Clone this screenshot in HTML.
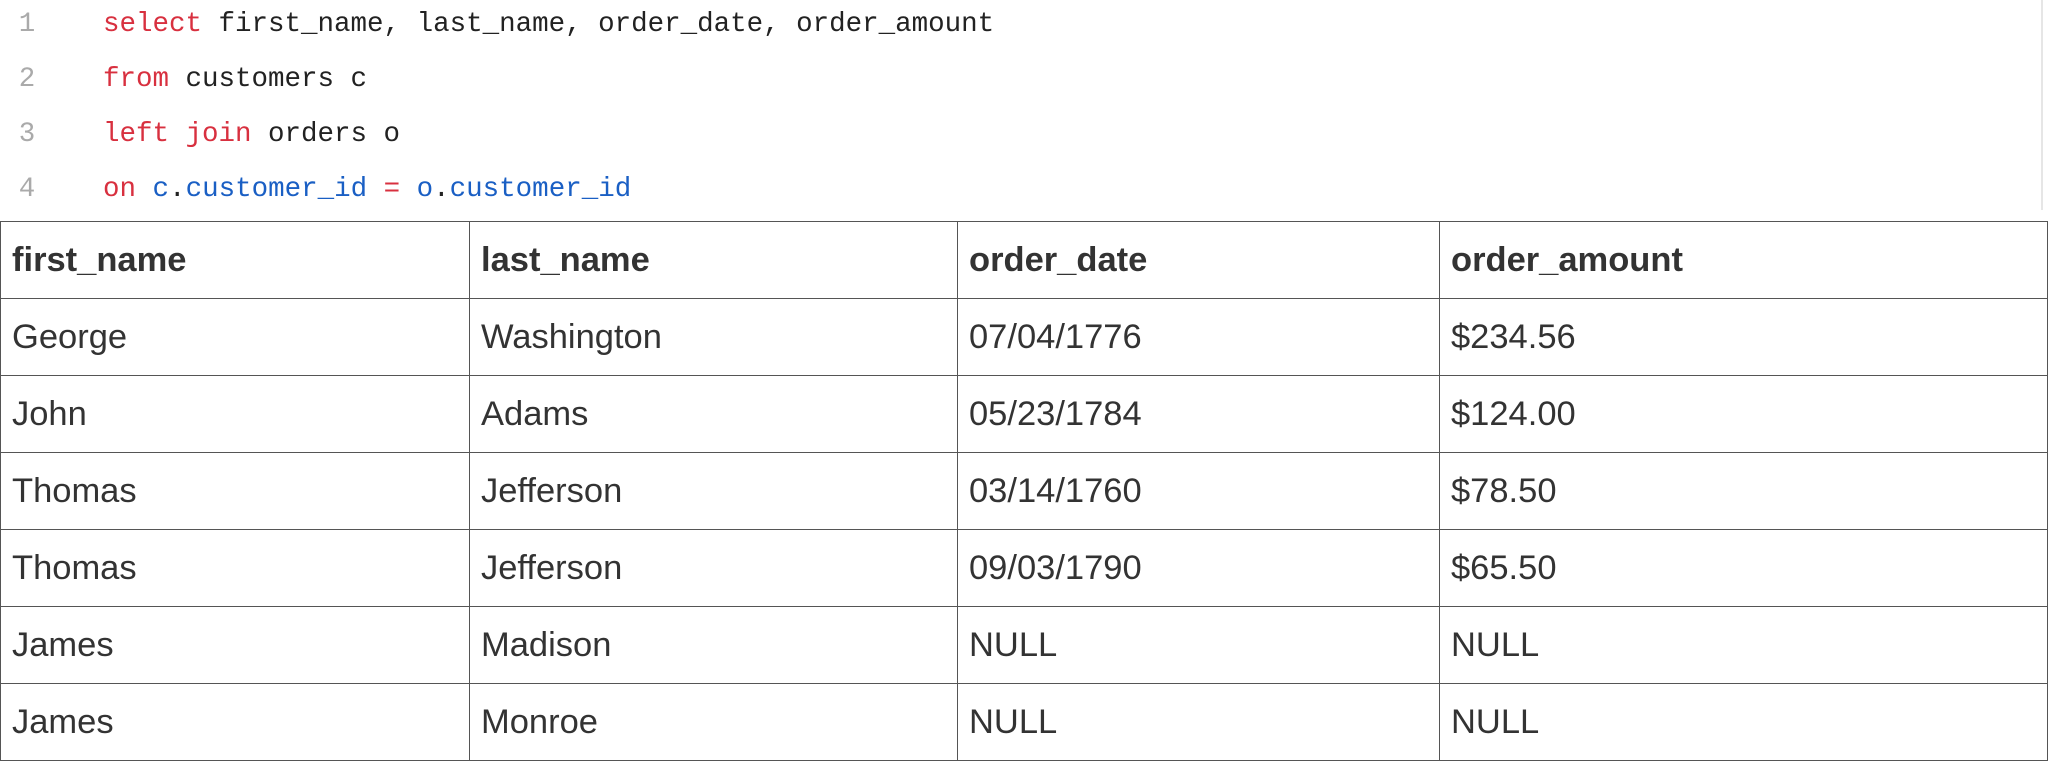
<!DOCTYPE html>
<html><head><meta charset="utf-8"><style>
html,body{margin:0;padding:0;background:#fff;width:2050px;height:761px;overflow:hidden}
.code{position:absolute;left:0;top:0;width:2042px;height:210px;font-family:"Liberation Mono",monospace;font-size:27.5px;color:#222}
.ln{position:absolute;left:4px;width:46px;text-align:center;color:#aaa}
.tx{position:absolute;left:103px;white-space:pre}
.k{color:#d8303f}.b{color:#1a5fc4}
.sb{position:absolute;left:2041px;top:0;width:2px;height:210px;background:#e6e6e6}
table{position:absolute;left:0;top:221px;border-collapse:collapse;width:2048px;font-family:"Liberation Sans",Arial,sans-serif;font-size:34.5px;color:#333}
td,th{border:1.5px solid #555;height:76px;padding:0 0 0 11px;text-align:left;vertical-align:middle}
th{font-weight:bold}
</style></head><body>
<div class="code">
<div class="ln" style="top:9px">1</div><div class="tx" style="top:9px"><span class="k">select</span> first_name, last_name, order_date, order_amount</div>
<div class="ln" style="top:64px">2</div><div class="tx" style="top:64px"><span class="k">from</span> customers c</div>
<div class="ln" style="top:119px">3</div><div class="tx" style="top:119px"><span class="k">left join</span> orders o</div>
<div class="ln" style="top:174px">4</div><div class="tx" style="top:174px"><span class="k">on</span> <span class="b">c</span>.<span class="b">customer_id</span> <span class="k">=</span> <span class="b">o</span>.<span class="b">customer_id</span></div>
</div>
<div class="sb"></div>
<table>
<colgroup><col style="width:469px"><col style="width:488px"><col style="width:482px"><col></colgroup>
<tr><th>first_name</th><th>last_name</th><th>order_date</th><th>order_amount</th></tr>
<tr><td>George</td><td>Washington</td><td>07/04/1776</td><td>$234.56</td></tr>
<tr><td>John</td><td>Adams</td><td>05/23/1784</td><td>$124.00</td></tr>
<tr><td>Thomas</td><td>Jefferson</td><td>03/14/1760</td><td>$78.50</td></tr>
<tr><td>Thomas</td><td>Jefferson</td><td>09/03/1790</td><td>$65.50</td></tr>
<tr><td>James</td><td>Madison</td><td>NULL</td><td>NULL</td></tr>
<tr><td>James</td><td>Monroe</td><td>NULL</td><td>NULL</td></tr>
</table>
</body></html>
